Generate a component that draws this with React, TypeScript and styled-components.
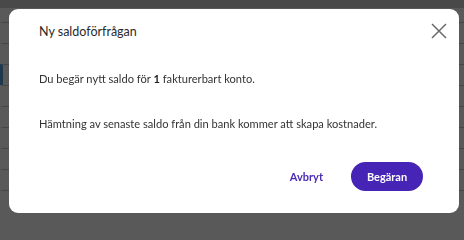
import React from 'react';
import styled, {createGlobalStyle} from 'styled-components';

const GlobalStyle = createGlobalStyle`
    html, body {
        margin: 0;
        padding: 0;
        height: 100%;
        overflow: hidden;
        background: #ffffff;
        font-family: Lato, "Noto Sans", sans-serif;
    }
`

const rows = [
    {value: '', tone: 'plain'},
    {value: '', tone: 'plain'},
    {value: '1', tone: 'blue'},
    {value: '1', tone: 'amber'},
    {value: '0', tone: 'plain'},
    {value: '', tone: 'plain'},
    {value: '', tone: 'plain'},
    {value: '', tone: 'plain'},
    {value: '', tone: 'plain'},
]

function App() {
    return (
        <>
            <GlobalStyle/>
            <Page>
                <PageHeader/>
                <Table>
                    {rows.map((row, i) => (
                        <TableRow key={i} $marked={row.tone === 'blue'}>
                            <Cell $tone={row.tone}>{row.value}</Cell>
                        </TableRow>
                    ))}
                </Table>
            </Page>

            <Backdrop>
                <Dialog role="dialog" aria-labelledby="dialog-title">
                    <Header>
                        <Title id="dialog-title">Ny saldoförfrågan</Title>
                        <CloseButton aria-label="Stäng">
                            <svg width="16" height="16" viewBox="0 0 16 16">
                                <path d="M1 1 L15 15 M15 1 L1 15" stroke="#6b6b6b" strokeWidth="1.5" fill="none"/>
                            </svg>
                        </CloseButton>
                    </Header>

                    <Body>
                        <Paragraph>Du begär nytt saldo för <strong>1</strong> fakturerbart konto.</Paragraph>
                        <Paragraph>Hämtning av senaste saldo från din bank kommer att skapa kostnader.</Paragraph>
                    </Body>

                    <Footer>
                        <TextButton>Avbryt</TextButton>
                        <PrimaryButton>Begäran</PrimaryButton>
                    </Footer>
                </Dialog>
            </Backdrop>
        </>
    );
}

const Page = styled.div`
    height: 100%;
    overflow: hidden;
`

const PageHeader = styled.div`
    height: 8px;
    background: #d2d2d2;
`

const Table = styled.div`
    display: flex;
    flex-direction: column;
    padding-top: 14px;
`

const TableRow = styled.div<{ $marked: boolean }>`
    height: 21px;
    border-top: 1px solid #c8c8c8;
    box-sizing: border-box;
    display: flex;
    align-items: center;
    border-left: 3px solid ${p => p.$marked ? '#5aa0e0' : 'transparent'};
`

const Cell = styled.span<{ $tone: string }>`
    padding-left: 8px;
    font-size: 14px;
    color: ${p => p.$tone === 'blue' ? '#2a5f9a' : p.$tone === 'amber' ? '#8a7420' : '#333'};
`

const Backdrop = styled.div`
    position: fixed;
    inset: 0;
    background: rgba(0, 0, 0, 0.65);
    display: flex;
    flex-direction: column;
    padding: 9px 5px 7px 9px;
    box-sizing: border-box;
`

const Dialog = styled.div`
    height: 204px;
    background: #ffffff;
    border-radius: 9px;
    display: flex;
    flex-direction: column;
    box-sizing: border-box;
`

const Header = styled.div`
    display: flex;
    align-items: center;
    justify-content: space-between;
    padding: 0 12px 0 30px;
    height: 44px;
`

const Title = styled.h2`
    margin: 0;
    font-size: 12.5px;
    font-weight: 400;
    color: #2a2a2a;
`

const CloseButton = styled.button`
    border: none;
    background: none;
    padding: 0;
    width: 16px;
    height: 16px;
    display: flex;
    align-items: center;
    justify-content: center;
    cursor: pointer;
`

const Body = styled.div`
    display: flex;
    flex-direction: column;
    gap: 27px;
    padding: 17px 30px 0;
`

const Paragraph = styled.p`
    margin: 0;
    font-size: 11.1px;
    line-height: 18px;
    color: #333333;

    strong {
        font-weight: 700;
        color: #1e1e1e;
    }
`

const Footer = styled.div`
    margin-top: auto;
    display: flex;
    justify-content: flex-end;
    align-items: center;
    gap: 28px;
    padding: 0 36px 22px 0;
`

const TextButton = styled.button`
    border: none;
    background: none;
    padding: 0;
    font-family: inherit;
    font-size: 11px;
    font-weight: 700;
    color: #4b2bb5;
    cursor: pointer;
`

const PrimaryButton = styled.button`
    border: none;
    height: 29px;
    width: 72px;
    border-radius: 15px;
    background: #4524b6;
    color: #ffffff;
    font-family: inherit;
    font-size: 11px;
    font-weight: 700;
    cursor: pointer;
`

export default App;
